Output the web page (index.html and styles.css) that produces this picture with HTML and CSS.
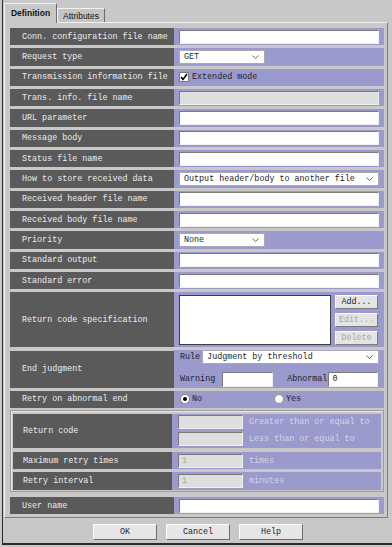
FILE: index.html
```html
<!DOCTYPE html>
<html>
  <head>
    <title>Definition</title>
    <link rel="stylesheet" href="styles.css">
  </head>
  <body>
    <div class="window">
      <div class="tabs">
        <div class="tab tab-active">Definition</div>
        <div class="tab">Attributes</div>
      </div>

      <div class="panel">
        <div class="row">
          <div class="label">Conn. configuration file name</div>
          <div class="value"><input type="text" class="field"></div>
        </div>
        <div class="row">
          <div class="label">Request type</div>
          <div class="value">
            <div class="select select-short"><span>GET</span><svg width="7" height="4" viewBox="0 0 7 4"><path d="M0.5 0.5 L3.5 3.5 L6.5 0.5" fill="none" stroke="#666" stroke-width="1"/></svg></div>
          </div>
        </div>
        <div class="row">
          <div class="label">Transmission information file</div>
          <div class="value">
            <span class="check"><svg width="8" height="8" viewBox="0 0 8 8"><path d="M1 4 L3 6.5 L7 1" fill="none" stroke="#000" stroke-width="1.6"/></svg></span>
            <span class="text">Extended mode</span>
          </div>
        </div>
        <div class="row">
          <div class="label">Trans. info. file name</div>
          <div class="value"><input type="text" class="field" disabled></div>
        </div>
        <div class="row">
          <div class="label">URL parameter</div>
          <div class="value"><input type="text" class="field"></div>
        </div>
        <div class="row">
          <div class="label">Message body</div>
          <div class="value"><input type="text" class="field"></div>
        </div>
        <div class="row">
          <div class="label">Status file name</div>
          <div class="value"><input type="text" class="field"></div>
        </div>
        <div class="row">
          <div class="label">How to store received data</div>
          <div class="value">
            <div class="select select-wide"><span>Output header/body to another file</span><svg width="7" height="4" viewBox="0 0 7 4"><path d="M0.5 0.5 L3.5 3.5 L6.5 0.5" fill="none" stroke="#666" stroke-width="1"/></svg></div>
          </div>
        </div>
        <div class="row">
          <div class="label">Received header file name</div>
          <div class="value"><input type="text" class="field"></div>
        </div>
        <div class="row">
          <div class="label">Received body file name</div>
          <div class="value"><input type="text" class="field"></div>
        </div>
        <div class="row">
          <div class="label">Priority</div>
          <div class="value">
            <div class="select select-short"><span>None</span><svg width="7" height="4" viewBox="0 0 7 4"><path d="M0.5 0.5 L3.5 3.5 L6.5 0.5" fill="none" stroke="#666" stroke-width="1"/></svg></div>
          </div>
        </div>
        <div class="row">
          <div class="label">Standard output</div>
          <div class="value"><input type="text" class="field"></div>
        </div>
        <div class="row">
          <div class="label">Standard error</div>
          <div class="value"><input type="text" class="field"></div>
        </div>

        <div class="row row-list">
          <div class="label">Return code specification</div>
          <div class="value">
            <div class="listbox"></div>
            <div class="side-buttons">
              <button class="small-btn">Add...</button>
              <button class="small-btn" disabled>Edit...</button>
              <button class="small-btn" disabled>Delete</button>
            </div>
          </div>
        </div>

        <div class="row row-judge">
          <div class="label">End judgment</div>
          <div class="value value-judge">
            <div class="line">
              <span class="text">Rule</span>
              <div class="select select-rule"><span>Judgment by threshold</span><svg width="7" height="4" viewBox="0 0 7 4"><path d="M0.5 0.5 L3.5 3.5 L6.5 0.5" fill="none" stroke="#666" stroke-width="1"/></svg></div>
            </div>
            <div class="line">
              <span class="text">Warning</span>
              <input type="text" class="field field-warn">
              <span class="text text-abnormal">Abnormal</span>
              <input type="text" class="field field-abn" value="0">
            </div>
          </div>
        </div>

        <div class="row row-retry">
          <div class="label">Retry on abnormal end</div>
          <div class="value">
            <span class="radio radio-on"></span><span class="text">No</span>
            <span class="radio radio-yes"></span><span class="text">Yes</span>
          </div>
        </div>

        <div class="group">
          <div class="row row-code">
            <div class="label">Return code</div>
            <div class="value value-code">
              <div class="line"><input type="text" class="field field-small" disabled><span class="muted">Greater than or equal to</span></div>
              <div class="line"><input type="text" class="field field-small" disabled><span class="muted">Less than or equal to</span></div>
            </div>
          </div>
          <div class="row">
            <div class="label">Maximum retry times</div>
            <div class="value"><input type="text" class="field field-small" value="1" disabled><span class="muted">times</span></div>
          </div>
          <div class="row row-interval">
            <div class="label">Retry interval</div>
            <div class="value"><input type="text" class="field field-small" value="1" disabled><span class="muted">minutes</span></div>
          </div>
        </div>

        <div class="row row-user">
          <div class="label">User name</div>
          <div class="value"><input type="text" class="field"></div>
        </div>
      </div>

      <div class="buttons">
        <button class="btn">OK</button>
        <button class="btn">Cancel</button>
        <button class="btn">Help</button>
      </div>
    </div>
  </body>
</html>
```

FILE: styles.css
```css
* {
  box-sizing: border-box;
}

body {
  margin: 0;
  background: #c8c8c8;
  font-family: "Liberation Mono", monospace;
  font-size: 8.4px;
  color: #1e1e28;
}

.window {
  height: 545px;
  margin-left: 2px;
  border-left: 1px solid #2c2c2c;
  border-bottom: 2px solid #2c2c2c;
  background: #c8c8c8;
}

/* tabs */

.tabs {
  display: flex;
  align-items: flex-end;
  height: 22px;
  padding-left: 1px;
  font-family: "Liberation Sans", Arial, sans-serif;
  font-size: 8.5px;
  color: #111;
}

.tab {
  width: 48px;
  height: 14px;
  display: flex;
  align-items: center;
  justify-content: center;
  background: #c4c4c4;
  border-top: 1px solid #f2f2f2;
  border-left: 1px solid #f2f2f2;
  border-right: 1px solid #6c6c6c;
}

.tab-active {
  width: 53px;
  height: 20px;
  margin-bottom: -1px;
  padding-bottom: 1px;
  background: #c8c8c8;
  font-weight: bold;
  position: relative;
  z-index: 1;
}

/* panel */

.panel {
  width: 384px;
  margin-left: 1px;
  padding: 5px 3px 3px 5px;
  border-top: 1px solid #f2f2f2;
  border-left: 1px solid #f2f2f2;
  border-right: 1px solid #7c7c7c;
  border-bottom: 1px solid #7c7c7c;
  display: flex;
  flex-direction: column;
}

.row {
  display: flex;
  height: 17.35px;
  flex: none;
}

.row + .row {
  margin-top: 3px;
}

.label {
  width: 164px;
  flex: none;
  display: flex;
  align-items: center;
  padding-left: 12px;
  background: #5a5a5a;
  color: #ececec;
  white-space: nowrap;
}

.value {
  flex: 1;
  display: flex;
  align-items: center;
  padding: 0 5px;
  background: #9a9acc;
  white-space: nowrap;
}

.field {
  width: 100%;
  height: 14px;
  margin: 0;
  padding: 0 3px;
  border: 1px solid;
  border-color: #7a7a7a #f0f0f0 #f0f0f0 #7a7a7a;
  border-radius: 0;
  background: #fff;
  font: inherit;
  color: #1e1e28;
  outline: none;
}

.field[disabled] {
  background: #dedede;
  color: #a8a8a8;
}

.select {
  height: 14px;
  display: flex;
  align-items: center;
  padding: 0 5px 0 4px;
  background: #fff;
  border: 1px solid #a8a8b8;
}

.select span {
  flex: 1;
}

.select-short {
  width: 86px;
}

.select-wide {
  width: 100%;
}

.check {
  width: 10px;
  height: 10px;
  display: flex;
  align-items: center;
  justify-content: center;
  background: #fff;
  border: 1px solid #7a7a7a;
  margin-right: 3px;
}

.text {
  color: #1e1e30;
}

/* return code specification */

.row.row-list {
  height: 55px;
}

.listbox {
  width: 152px;
  height: 50px;
  background: #fff;
  border: 1px solid #3c3c3c;
}

.side-buttons {
  display: flex;
  flex-direction: column;
  gap: 4px;
  margin-left: 4px;
}

.small-btn {
  width: 43px;
  height: 14px;
  margin: 0;
  padding: 0;
  background: #e4e4e4;
  border: 1px solid;
  border-color: #fafafa #7a7a7a #7a7a7a #fafafa;
  border-radius: 0;
  font: inherit;
  color: #1e1e28;
}

.small-btn[disabled] {
  color: #a6a6a6;
}

/* end judgment */

.row.row-judge {
  height: 37px;
  margin-top: 3.5px;
}

.value-judge {
  flex-direction: column;
  align-items: stretch;
  justify-content: space-between;
  padding: 0 5px 1px 6px;
  margin-top: -1px;
}

.line {
  display: flex;
  align-items: center;
}

.select-rule {
  flex: 1;
  margin-left: 2px;
}

.field-warn {
  width: 51px;
  margin-left: 7px;
  height: 15px;
}

.text-abnormal {
  margin-left: 14px;
}

.field-abn {
  width: 50px;
  margin-left: 1px;
  height: 15px;
}

/* retry */

.row.row-retry {
  height: 17px;
}

.row-retry .value {
  padding-left: 6px;
}

.radio {
  width: 10px;
  height: 10px;
  border-radius: 50%;
  background: #fff;
  border: 1px solid #8a8a8a;
  margin-right: 2px;
  display: flex;
  align-items: center;
  justify-content: center;
}

.radio-on::after {
  content: "";
  width: 4px;
  height: 4px;
  border-radius: 50%;
  background: #000;
}

.radio-yes {
  margin-left: 72px;
}

/* retry group */

.group {
  margin-top: 2px;
  padding: 3px 2px 1px 2px;
  border: 1px solid #9c9c9c;
  box-shadow: inset 1px 1px 0 #e6e6e6;
  display: flex;
  flex-direction: column;
}

.group .label {
  width: 159px;
  padding-left: 10px;
}

.group .value {
  padding-left: 6px;
}

.row.row-code {
  height: 34px;
}

.row-code + .row {
  margin-top: 4px;
}

.value-code {
  flex-direction: column;
  align-items: stretch;
  justify-content: center;
  gap: 3px;
}

.row.row-interval {
  height: 18px;
}

.field-small {
  width: 65px;
  flex: none;
}

.muted {
  margin-left: 6px;
  color: #d6d6e4;
}

.row.row-user {
  margin-top: 5px;
  height: 17px;
}

/* dialog buttons */

.buttons {
  display: flex;
  justify-content: center;
  gap: 9px;
  margin-top: 6px;
  padding-left: 1px;
}

.btn {
  width: 64px;
  height: 16px;
  margin: 0;
  padding: 0;
  background: #e6e6e6;
  border: 1px solid;
  border-color: #fafafa #6e6e6e #6e6e6e #fafafa;
  border-radius: 0;
  font: inherit;
  color: #1e1e28;
}
```
